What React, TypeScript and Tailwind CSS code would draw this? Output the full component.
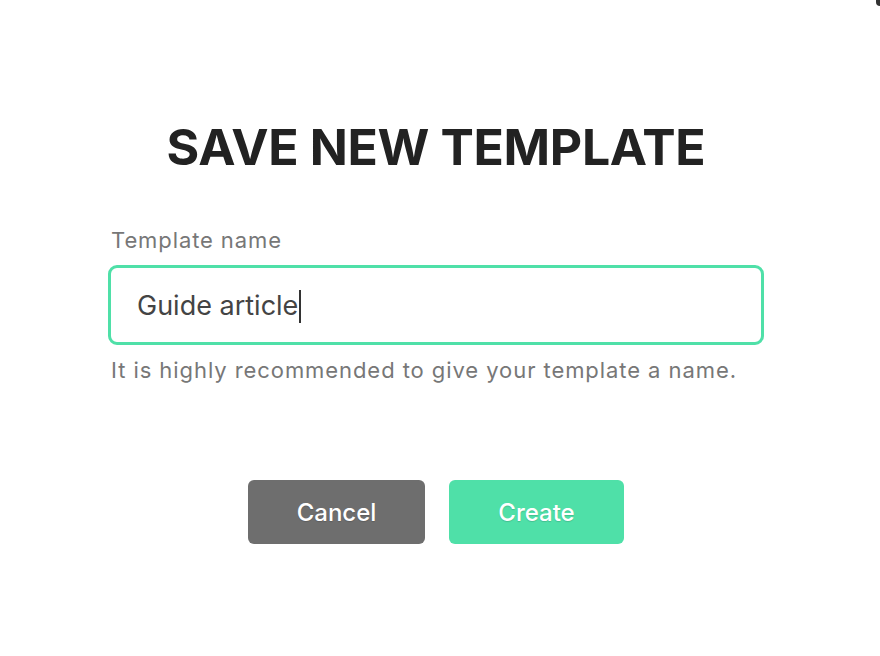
export default function App() {
  return (
    <div
      className="relative h-[656px] w-[880px] overflow-hidden bg-white"
      style={{ fontFamily: 'Inter, "Noto Sans", sans-serif' }}
    >
      <div className="absolute right-0 top-0 h-[6px] w-[4px] rounded-bl-sm bg-[#333]" />
      <div className="flex justify-center pr-2 pt-[115px]">
        <div className="flex w-[656px] flex-col">
          <h1 className="text-center text-[50px] font-bold leading-[64px] tracking-[-0.35px] text-[#222]">
            SAVE NEW TEMPLATE
          </h1>
          <label className="mt-[49px] pl-[3px] text-[22px] leading-[24px] tracking-[0.9px] text-[#777]">
            Template name
          </label>
          <div className="mt-[13px] flex h-[80px] items-center rounded-[9px] border-[3px] border-[#4fe0a8] pl-[26px] pt-[3px]">
            <span className="text-[27px] text-[#444]">Guide article</span>
            <span className="ml-[1px] h-[33px] w-[1.5px] bg-[#333]" />
          </div>
          <p className="mt-[13px] pl-[3px] text-[22px] leading-[24px] tracking-[0.93px] text-[#777]">
            It is highly recommended to give your template a name.
          </p>
          <div className="mt-[98px] flex justify-center gap-[24px]">
            <button
              type="button"
              className="h-[64px] w-[177px] rounded-[6px] bg-[#6e6e6e] pt-[2px] text-[24px] font-medium text-white [text-shadow:0_1px_1px_rgba(0,0,0,0.15)]"
            >
              Cancel
            </button>
            <button
              type="button"
              className="h-[64px] w-[175px] rounded-[6px] bg-[#4fe0a8] pt-[2px] text-[24px] font-medium text-white [text-shadow:0_1px_1px_rgba(0,0,0,0.15)]"
            >
              Create
            </button>
          </div>
        </div>
      </div>
    </div>
  );
}
